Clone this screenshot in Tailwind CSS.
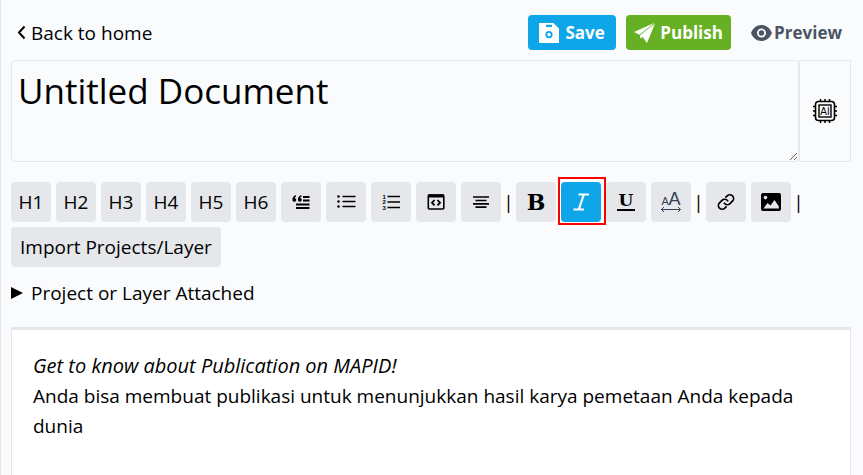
<!DOCTYPE html>
<html lang="en">
    <head>
        <meta charset="UTF-8" />
        <meta name="viewport" content="width=device-width, initial-scale=1.0" />
        <title>Untitled Document</title>
        <script src="https://cdn.jsdelivr.net/npm/@tailwindcss/browser@4"></script>
    </head>
    <body class="bg-[#fafbfd] text-black font-['Open_Sans','Noto_Sans',sans-serif] text-[19px] leading-[30px]">
        <main class="flex flex-col min-h-screen border-l border-gray-200 pl-[10px] pr-3">
            <!-- top bar -->
            <header class="flex items-center justify-between pt-[15px] pb-[10px]">
                <a href="#" class="flex items-center gap-1 pl-1">
                    <svg class="w-3 h-4" viewBox="0 0 12 16" fill="none" stroke="currentColor" stroke-width="2">
                        <path d="M9.500 1.500 4 7.500l5.500 6" />
                    </svg>
                    Back to home
                </a>
                <div class="flex items-center font-bold text-[17px] text-white">
                    <button class="flex items-center justify-center gap-[6px] w-[88px] h-[35px] rounded bg-[#0ea5e9] mr-[10px]">
                        <svg class="w-5 h-5" viewBox="0 0 20 20" fill="currentColor">
                            <path fill-rule="evenodd" d="M0 0h14.500L20 5.500V20H0zM7 1.800V4h6V1.800zM10 8a3.600 3.600 0 1 0 0 7.200A3.600 3.600 0 0 0 10 8zm0 1.800a1.800 1.800 0 1 1 0 3.600 1.800 1.800 0 0 1 0-3.600z" />
                        </svg>
                        Save
                    </button>
                    <button class="flex items-center justify-center gap-1 w-[105px] h-[35px] rounded bg-[#65b023]">
                        <svg class="w-[22px] h-[22px]" viewBox="0 0 22 22" fill="currentColor">
                            <path d="M20 1 0 10l5.500 2.800z" />
                            <path d="M21 1.500 8 14l5 7z" />
                            <path d="M20.500 1 6 13.500V15l1 1.500z" />
                        </svg>
                        Publish
                    </button>
                    <button class="flex items-center gap-[2px] h-[35px] ml-[20px] mr-[9px] text-[#4b5563]">
                        <svg class="w-[21px] h-[18px]" viewBox="0 0 21 18" fill="currentColor">
                            <path fill-rule="evenodd" d="M10.500 1C5.500 1 1.800 4.500 0 9c1.800 4.500 5.500 8 10.500 8S19.200 13.500 21 9C19.200 4.500 15.500 1 10.500 1zm0 3.500a4.500 4.500 0 1 1 0 9 4.500 4.500 0 0 1 0-9zm0 1.800a2.700 2.700 0 1 0 0 5.400 2.700 2.700 0 0 0 0-5.400z" />
                        </svg>
                        Preview
                    </button>
                </div>
            </header>

            <!-- document title -->
            <div class="flex">
                <textarea
                    aria-label="Document title"
                    class="block flex-1 h-[102px] px-[6px] py-[6px] bg-transparent border border-gray-200 rounded text-[35px] leading-[48px] resize overflow-hidden"
                >Untitled Document</textarea>
                <button class="flex items-center justify-center w-[52px] border border-gray-200" aria-label="AI">
                    <svg class="w-6 h-6" viewBox="0 0 24 24" fill="none" stroke="currentColor">
                        <rect x="2.500" y="2.500" width="19" height="19" rx="3" stroke-width="1.600" />
                        <rect x="6" y="6" width="12" height="12" stroke-width="1.400" />
                        <path stroke-width="1.500" d="M7.500 0v2.500M12 0v2.500M16.500 0v2.500M7.500 21.500V24M12 21.500V24M16.500 21.500V24M0 7.500h2.500M0 12h2.500M0 16.500h2.500M21.500 7.500H24M21.500 12H24M21.500 16.500H24" />
                        <text x="12" y="15.500" text-anchor="middle" font-family="Liberation Sans" font-size="10" fill="currentColor" stroke="none">AI</text>
                    </svg>
                </button>
            </div>

            <!-- toolbar -->
            <div class="flex flex-wrap gap-[5px] mt-5">
                <button class="w-10 h-10 rounded bg-gray-200">H1</button>
                <button class="w-10 h-10 rounded bg-gray-200">H2</button>
                <button class="w-10 h-10 rounded bg-gray-200">H3</button>
                <button class="w-10 h-10 rounded bg-gray-200">H4</button>
                <button class="w-10 h-10 rounded bg-gray-200">H5</button>
                <button class="w-10 h-10 rounded bg-gray-200">H6</button>
                <button class="flex items-center justify-center w-10 h-10 rounded bg-gray-200" aria-label="Quote">
                    <svg class="w-5 h-5" viewBox="0 0 20 20" fill="none" stroke="currentColor" stroke-width="1.900">
                        <path d="M12 5h6.500M12 8.500h6.500M5 12.500h13.500M5 16h13.500" />
                        <path fill="currentColor" stroke="none" d="M5 3.300v1.500c-.9.200-1.300.7-1.300 1.300a1.900 1.900 0 1 1-2.200 2.100C1.200 5.600 2.500 3.700 5 3.300zM10.500 3.300v1.500c-.9.200-1.300.7-1.300 1.300A1.900 1.900 0 1 1 7 8.200c-.3-2.600 1-4.500 3.500-4.900z" />
                    </svg>
                </button>
                <button class="flex items-center justify-center w-10 h-10 rounded bg-gray-200" aria-label="Bulleted list">
                    <svg class="w-5 h-5" viewBox="0 0 20 20" fill="none" stroke="currentColor" stroke-width="1.400" stroke-linecap="round">
                        <path d="M7 4.500h12M7 9.500h12M7 14.500h12" />
                        <path stroke-width="2.600" d="M2.500 4.500h.01M2.500 9.500h.01M2.500 14.500h.01" />
                    </svg>
                </button>
                <button class="flex items-center justify-center w-10 h-10 rounded bg-gray-200" aria-label="Numbered list">
                    <svg class="w-5 h-5" viewBox="0 0 20 20" fill="none" stroke="currentColor" stroke-width="1.500">
                        <path d="M6.500 4.500H19M6.500 10H19M6.500 15.500H19" />
                        <g fill="currentColor" stroke="none" font-family="Liberation Sans" font-weight="bold" font-size="6">
                            <text x="1.500" y="6.500">1</text>
                            <text x="1.500" y="12">2</text>
                            <text x="1.500" y="17.500">3</text>
                        </g>
                    </svg>
                </button>
                <button class="flex items-center justify-center w-10 h-10 rounded bg-gray-200" aria-label="Code block">
                    <svg class="w-5 h-5" viewBox="0 0 20 20" fill="none" stroke="currentColor" stroke-width="1.600">
                        <rect x="2.300" y="3" width="15.500" height="14" rx="1" />
                        <path stroke-width="3" d="M2 4h16" />
                        <path stroke-width="1.800" d="M8.500 8 6 10.700l2.500 2.700M11.500 8l2.500 2.700-2.500 2.700" />
                    </svg>
                </button>
                <button class="flex items-center justify-center w-10 h-10 rounded bg-gray-200" aria-label="Align center">
                    <svg class="w-5 h-5" viewBox="0 0 20 20" fill="none" stroke="currentColor" stroke-width="1.700">
                        <path d="M2 5h16M4.500 8.500h11M2 11.800h16M4.500 15.200h11" />
                    </svg>
                </button>
                <span class="flex items-center justify-center w-[5px] h-10">|</span>
                <button class="w-10 h-10 rounded bg-gray-200 font-['DejaVu_Serif',serif] font-bold text-[22px]">B</button>
                <div class="relative w-10 h-10">
                    <button class="flex items-center justify-center w-10 h-10 rounded bg-[#0ea5e9] text-white" aria-label="Italic">
                        <svg class="w-6 h-6" viewBox="0 0 24 24" fill="none" stroke="currentColor" stroke-width="2.200">
                            <path d="M9.500 4.500H20M4.500 19.500H15M14.800 4.500l-5 15" />
                        </svg>
                    </button>
                    <div class="absolute -left-[3px] -right-[5px] -top-[5px] -bottom-[3px] z-10 border-2 border-[#ff0000] pointer-events-none"></div>
                </div>
                <button class="flex items-center justify-center w-10 h-10 rounded bg-gray-200" aria-label="Underline">
                    <svg class="w-6 h-6" viewBox="0 0 24 24" fill="currentColor">
                        <text x="12" y="16" text-anchor="middle" font-family="DejaVu Serif" font-weight="bold" font-size="17">U</text>
                        <rect x="3" y="19" width="18" height="2" />
                    </svg>
                </button>
                <button class="flex items-center justify-center w-10 h-10 rounded bg-gray-200 text-gray-700" aria-label="Font size">
                    <svg class="w-6 h-6" viewBox="0 0 24 24" fill="none" stroke="currentColor">
                        <g fill="currentColor" stroke="none" font-family="Liberation Sans">
                            <text x="2.500" y="15" font-size="11">A</text>
                            <text x="9.500" y="15" font-size="18">A</text>
                        </g>
                        <path d="M2.500 19.500h19M5 17l-2.500 2.500L5 22M19 17l2.500 2.500L19 22" />
                    </svg>
                </button>
                <span class="flex items-center justify-center w-[5px] h-10">|</span>
                <button class="flex items-center justify-center w-10 h-10 rounded bg-gray-200" aria-label="Link">
                    <svg class="w-5 h-5" viewBox="0 0 24 24" fill="none" stroke="currentColor" stroke-width="2" stroke-linecap="round">
                        <path d="M10 13.500a4.500 4.500 0 0 0 6.800.5l3-3a4.500 4.500 0 0 0-6.400-6.400L11.800 6.200" />
                        <path d="M14 10.500a4.500 4.500 0 0 0-6.800-.5l-3 3a4.500 4.500 0 0 0 6.400 6.400l1.600-1.600" />
                    </svg>
                </button>
                <button class="flex items-center justify-center w-10 h-10 rounded bg-gray-200" aria-label="Image">
                    <svg class="w-5 h-[18px]" viewBox="0 0 20 18" fill="currentColor">
                        <path fill-rule="evenodd" d="M2 0h16a2 2 0 0 1 2 2v14a2 2 0 0 1-2 2H2a2 2 0 0 1-2-2V2a2 2 0 0 1 2-2zM4.500 2.800a1.800 1.800 0 1 0 0 3.600 1.800 1.800 0 0 0 0-3.600zM2.500 15.500h15.300v-2.200L13.500 7 9.500 12.500 6.500 10z" />
                    </svg>
                </button>
                <span class="flex items-center justify-center w-[5px] h-10">|</span>
                <button class="h-10 px-[9px] rounded bg-gray-200">Import Projects/Layer</button>
            </div>

            <details class="mt-[11px]">
                <summary class="flex items-center gap-2 cursor-pointer">
                    <svg class="w-3 h-3" viewBox="0 0 12 12" fill="currentColor"><path d="M0 0v12l12-6z" /></svg>
                    Project or Layer Attached
                </summary>
            </details>

            <!-- editor -->
            <article class="flex-1 mt-[19px] px-[21px] pt-[21px] bg-white border-x border-t-3 border-gray-200" contenteditable="true">
                <p class="italic text-[20px]">Get to know about Publication on MAPID!</p>
                <p>Anda bisa membuat publikasi untuk menunjukkan hasil karya pemetaan Anda kepada dunia</p>
            </article>
        </main>
    </body>
</html>
